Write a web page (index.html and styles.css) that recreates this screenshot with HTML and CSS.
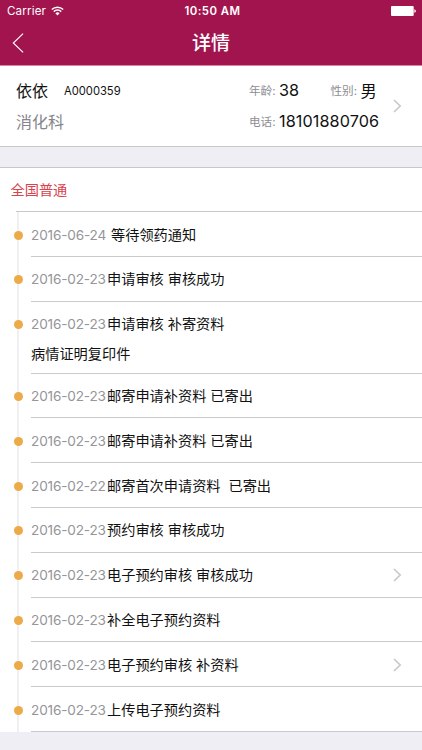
FILE: index.html
```html
<!DOCTYPE html>
<html lang="zh-CN">
<head>
<meta charset="utf-8">
<title>详情</title>
<link rel="stylesheet" href="styles.css">
</head>
<body>
<header class="header">
  <div class="status">
    <div class="carrier"><span>Carrier</span>
      <svg class="wifi" viewBox="0 0 13 10" width="13" height="10"><path d="M.8 3.5a8.2 8.2 0 0 1 11.4 0M2.8 5.6a5.3 5.3 0 0 1 7.4 0" fill="none" stroke="currentColor" stroke-width="1.5"/><path d="M4.4 7.2a3 3 0 0 1 4.2 0L6.5 9.4z" fill="currentColor"/></svg>
    </div>
    <div class="clock">10:50 AM</div>
    <svg class="battery" viewBox="0 0 25 10" width="25" height="10"><rect width="22.7" height="10" rx="1" fill="currentColor"/><path d="M23.3 3.2q1.6.4 1.6 1.8t-1.6 1.8z" fill="currentColor"/></svg>
  </div>
  <div class="nav">
    <svg class="back" viewBox="0 0 12 20" width="12" height="20"><path d="M11.1.6 1.3 10l9.8 9.4" fill="none" stroke="currentColor" stroke-width="1.1"/></svg>
    <h1>详情</h1>
  </div>
</header>
<section class="profile">
  <div class="person">
    <div class="line"><span class="name">依依</span><span class="code">A0000359</span></div>
    <div class="line dept">消化科</div>
  </div>
  <div class="facts">
    <div class="line"><span class="label">年龄:</span><span class="value age">38</span><span class="label">性别:</span><span class="value">男</span></div>
    <div class="line"><span class="label">电话:</span><span class="value phone">18101880706</span></div>
  </div>
  <svg class="chevron" viewBox="0 0 9 14" width="9" height="14"><path d="M1 1l6.2 6L1 13"/></svg>
</section>
<main class="panel">
  <h2>全国普通</h2>
  <ol class="timeline">
    <li class="item first"><i class="dot"></i><div class="entry"><time>2016-06-24</time><span>等待领药通知</span></div></li>
    <li class="item"><i class="dot"></i><div class="entry"><time>2016-02-23</time><span>申请审核 审核成功</span></div></li>
    <li class="item tall"><i class="dot"></i><div class="entry"><time>2016-02-23</time><span>申请审核 补寄资料</span></div><p class="note">病情证明复印件</p></li>
    <li class="item"><i class="dot"></i><div class="entry"><time>2016-02-23</time><span>邮寄申请补资料 已寄出</span></div></li>
    <li class="item"><i class="dot"></i><div class="entry"><time>2016-02-23</time><span>邮寄申请补资料 已寄出</span></div></li>
    <li class="item"><i class="dot"></i><div class="entry"><time>2016-02-22</time><span>邮寄首次申请资料&nbsp; 已寄出</span></div></li>
    <li class="item"><i class="dot"></i><div class="entry"><time>2016-02-23</time><span>预约审核 审核成功</span></div></li>
    <li class="item"><i class="dot"></i><div class="entry"><time>2016-02-23</time><span>电子预约审核 审核成功</span><svg class="chevron" viewBox="0 0 9 14" width="9" height="14"><path d="M1 1l6.2 6L1 13"/></svg></div></li>
    <li class="item"><i class="dot"></i><div class="entry"><time>2016-02-23</time><span>补全电子预约资料</span></div></li>
    <li class="item"><i class="dot"></i><div class="entry"><time>2016-02-23</time><span>电子预约审核 补资料</span><svg class="chevron" viewBox="0 0 9 14" width="9" height="14"><path d="M1 1l6.2 6L1 13"/></svg></div></li>
    <li class="item"><i class="dot"></i><div class="entry"><time>2016-02-23</time><span>上传电子预约资料</span></div></li>
  </ol>
</main>
</body>
</html>
```
FILE: styles.css
```css
* { box-sizing: border-box; }
body {
  margin: 0;
  height: 750px;
  overflow: hidden;
  background: #efeef4;
  color: #111;
  font-family: Inter, "Noto Sans CJK SC", sans-serif;
}
h1, h2, ol, p { margin: 0; padding: 0; font-weight: 400; list-style: none; }
svg { display: block; flex: none; }

.header { height: 66px; background: #a2144d; color: #fff; border-bottom: 1px solid #d984a5; }
.status {
  display: grid;
  grid-template-columns: 1fr auto 1fr;
  align-items: center;
  height: 22px;
  padding: 0 6px 0 7px;
  font-size: 11.6px;
}
.carrier { display: flex; align-items: center; gap: 5px; letter-spacing: .15px; }
.clock { margin-left: 2px; font-weight: 600; font-size: 11.4px; letter-spacing: .45px; }
.battery { justify-self: end; }
.nav {
  display: grid;
  grid-template-columns: 12px 1fr 12px;
  align-items: center;
  height: 43px;
  padding: 0 12px;
}
.back { margin-top: -2px; }
.nav h1 { text-align: center; font-size: 19px; font-weight: 500; line-height: 28px; }

.profile {
  display: flex;
  height: 81px;
  padding: 9px 20px 0 16px;
  background: #fff;
  border-bottom: 1px solid #c8c7cc;
}
.line { display: flex; align-items: center; height: 30.5px; white-space: nowrap; }
.person { width: 233px; }
.name { width: 48px; font-size: 16px; }
.code { margin-top: 1px; font-size: 11.2px; }
.dept { font-size: 16px; color: #85858b; }
.facts { width: 144px; }
.label { width: 30px; font-size: 11.6px; color: #8e8e93; }
.value { font-size: 16.2px; letter-spacing: .1px; }
.age { width: 51.5px; }
.chevron { fill: none; stroke: #c7c7cc; stroke-width: 1.6; }
.profile .chevron { margin-top: 24px; }

.panel { margin-top: 20px; background: #fff; border-top: 1px solid #c8c7cc; }
.panel h2 { height: 43px; padding-left: 10.5px; font-size: 14.2px; line-height: 43px; color: #d8434e; }
.timeline {
  margin-left: 16px;
  border-top: 1px solid #c8c7cc;
  background: linear-gradient(#f0f0f2, #f0f0f2) 1px 0 / 2px 100% no-repeat;
}
.item { position: relative; height: 44.8px; padding-left: 15px; }
.item::after {
  content: "";
  position: absolute;
  left: 15px;
  right: 0;
  bottom: 0;
  height: 1px;
  background: #cacace;
}
.item.tall { height: 72px; }
.dot {
  position: absolute;
  left: -2.5px;
  top: 18.5px;
  width: 9px;
  height: 9px;
  border-radius: 50%;
  background: #edaa48;
}
.entry { display: flex; align-items: center; height: 45px; padding-right: 20px; font-size: 14.2px; white-space: pre; }
.entry span { margin-top: -2px; }
.entry time { width: 76px; color: #95959a; font-size: 13.6px; letter-spacing: -.16px; }
.first time { width: 80px; }
.entry .chevron { margin-left: auto; }
.note { margin-top: -5px; font-size: 14.2px; line-height: 24px; }
```
